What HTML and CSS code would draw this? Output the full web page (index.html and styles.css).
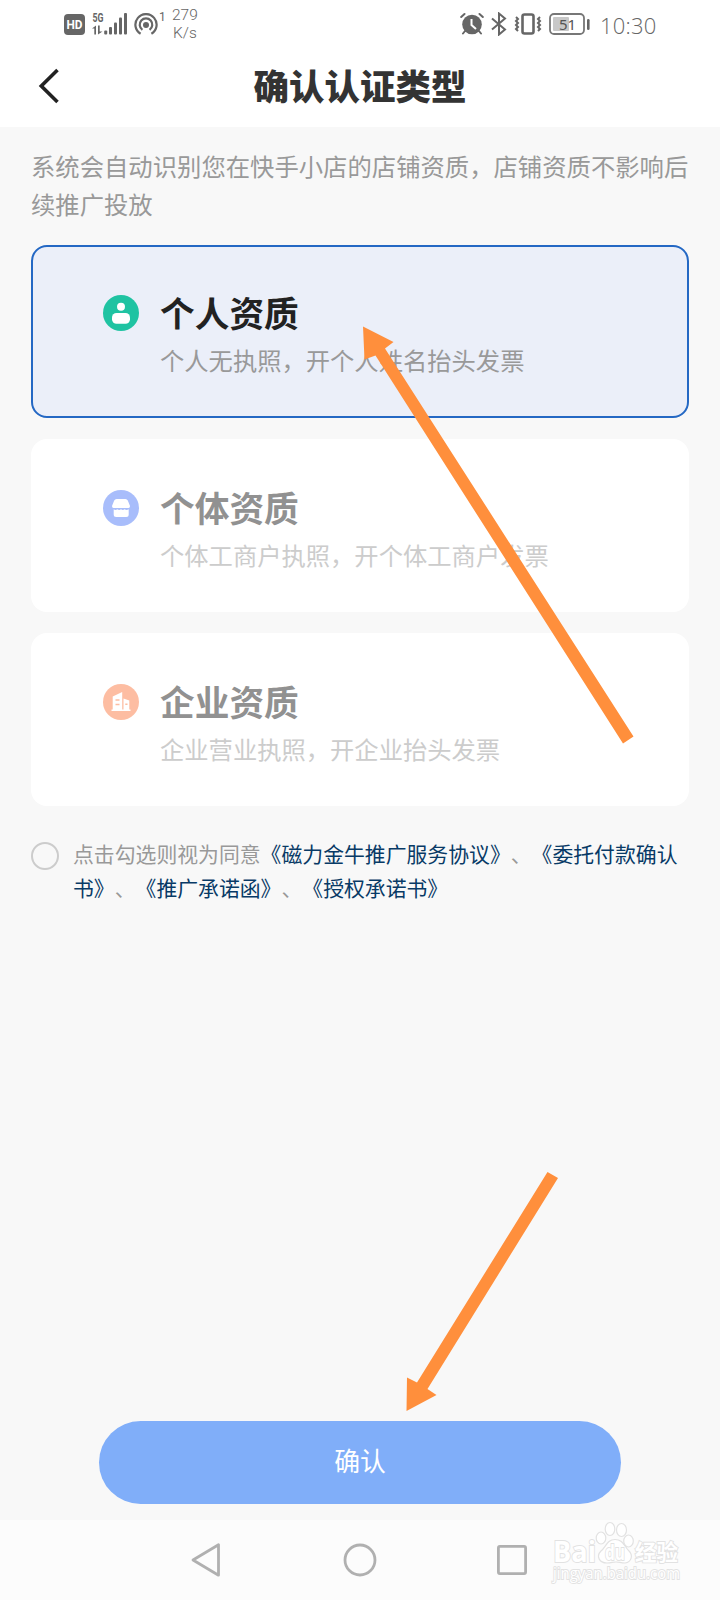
FILE: index.html
```
<!DOCTYPE html>
<html lang="zh-CN">
<head>
<meta charset="utf-8">
<title>确认认证类型</title>
<link rel="stylesheet" href="styles.css">
</head>
<body>
<div class="screen">
  <div class="status">
    <div class="status-left">
      <svg class="hd" width="21" height="21" viewBox="0 0 21 21"><rect width="21" height="21" rx="4" fill="#666"/><text x="10.5" y="15.2" text-anchor="middle" textLength="16" lengthAdjust="spacingAndGlyphs" class="hd-text">HD</text></svg>
      <svg class="signal" width="36" height="26" viewBox="0 -2 36 26" fill="#666">
        <text x="0.5" y="10.3" class="fiveg" textLength="11" lengthAdjust="spacingAndGlyphs">5G</text>
        <path d="M0 16.500 4 13.500V22.500H2.300V16.500ZM6 13.500H7.700V19.500H10.500L6 22.500Z"/>
        <rect x="12.200" y="18.500" width="3" height="4" rx="1"/><rect x="17" y="15" width="3" height="7.500" rx="1"/><rect x="22" y="10.500" width="3" height="12" rx="1"/><rect x="27" y="5.500" width="3" height="17" rx="1"/><rect x="32" y="1" width="3" height="21.500" rx="1"/>
      </svg>
      <svg class="hotspot" width="24" height="23" viewBox="0 0 24 23" fill="none" stroke="#666" stroke-width="2.200">
        <path d="M6.600 20.800A10.600 10.600 0 1 1 17.400 20.800"/><path d="M8.400 16.900A6.300 6.300 0 1 1 15.600 16.900"/><circle cx="12" cy="12" r="3" fill="#666" stroke="none"/>
      </svg>
      <span class="hotcount">1</span>
      <span class="speed">279<br>K/s</span>
    </div>
    <div class="status-right">
      <svg width="24" height="24" viewBox="0 0 24 24" fill="none" stroke="#666" stroke-width="2"><circle cx="12" cy="12.500" r="9.800" fill="#666" stroke="none"/><path d="M1.200 5 4.500 2M22.800 5 19.500 2M5 19 3 21.500M19 19l2 2.500" stroke-linecap="round"/><path d="M11.500 7V13L16 17" stroke="#fff"/></svg>
      <svg class="bt" width="16" height="24" viewBox="0 0 16 24" fill="none" stroke="#666" stroke-width="2"><path d="M1 6.500 14 17.500 8 22.500V1.500L14 6.500 1 17.500"/></svg>
      <svg class="vib" width="28" height="22" viewBox="0 0 28 22" fill="none" stroke="#666" stroke-width="2"><rect x="8.500" y="1.500" width="11" height="19" rx="2" stroke-width="2.600"/><path d="M2 4 4 6 2 8 4 10 2 12 4 14 2 16 4 18M26 4 24 6 26 8 24 10 26 12 24 14 26 16 24 18"/></svg>
      <svg class="battery" width="42" height="22" viewBox="0 0 42 22"><rect x="1" y="1" width="34" height="20" rx="4" fill="none" stroke="#777" stroke-width="1.800"/><rect x="4" y="4" width="16" height="14" rx="1" fill="#c8c8c8"/><rect x="38" y="6" width="2.600" height="11" rx="1.300" fill="#666"/><text x="18.500" y="16.500" text-anchor="middle" class="bat-text">51</text></svg>
      <span class="clock">10:30</span>
    </div>
  </div>
  <header class="header">
    <svg class="back" width="24" height="38" viewBox="0 0 24 38" fill="none" stroke="#222" stroke-width="3.600"><path d="M20.500 3 4.300 19 20.500 35"/></svg>
    <h1 class="title">确认认证类型</h1>
  </header>
  <main class="main">
    <p class="intro">系统会自动识别您在快手小店的店铺资质，店铺资质不影响后续推广投放</p>
    <div class="cards">
      <section class="card selected">
        <svg class="icon" width="36" height="36" viewBox="0 0 36 36"><circle cx="18" cy="18" r="18" fill="#1fc3a2"/><circle cx="18" cy="11.800" r="4" fill="#fff"/><rect x="9" y="18" width="18" height="10.700" rx="4.500" fill="#fff"/></svg>
        <div><h2 class="name">个人资质</h2><p class="desc">个人无执照，开个人姓名抬头发票</p></div>
      </section>
      <section class="card">
        <svg class="icon" width="36" height="36" viewBox="0 0 36 36"><circle cx="18" cy="18" r="18" fill="#a8bdfb"/><path d="M13.500 9H22.500Q24 9 24.800 10.500L27 16Q27 18 25.500 18H10.500Q9 18 9 16L11.200 10.500Q12 9 13.500 9ZM10.700 19.300Q12.500 20.500 14.300 19.300 16.200 20.500 18 19.300 19.800 20.500 21.700 19.300 23.500 20.500 25.700 19.300V24.500Q25.700 27 23.200 27H13.200Q10.700 27 10.700 24.500Z" fill="#fff"/></svg>
        <div><h2 class="name">个体资质</h2><p class="desc">个体工商户执照，开个体工商户发票</p></div>
      </section>
      <section class="card">
        <svg class="icon" width="36" height="36" viewBox="0 0 36 36"><circle cx="18" cy="18" r="18" fill="#fdbda2"/><path d="M8.500 25.500H9.700V12.500L19.200 8V25.500H20.500V14.500L26.300 16.500V25.500H27.500V27H8.500Z" fill="#fff"/><path d="M12.500 16H16.500M12.500 20.500H16.500M22.300 20.300H24.500" stroke="#fdbda2" stroke-width="1.500"/></svg>
        <div><h2 class="name">企业资质</h2><p class="desc">企业营业执照，开企业抬头发票</p></div>
      </section>
    </div>
    <div class="agree">
      <span class="radio"></span>
      <p class="terms">点击勾选则视为同意<a>《磁力金牛推广服务协议》</a>、<a>《委托付款确认书》</a>、<a>《推广承诺函》</a>、<a>《授权承诺书》</a></p>
    </div>
    <button class="confirm">确认</button>
  </main>
  <nav class="nav">
    <svg width="32" height="36" viewBox="0 0 32 36" fill="none" stroke="#b0b0b0" stroke-width="2.800" stroke-linejoin="round"><path d="M28.500 2.800V33.200L3 18Z"/></svg>
    <svg class="home" width="34" height="34" viewBox="0 0 34 34" fill="none" stroke="#b0b0b0" stroke-width="2.800"><circle cx="17" cy="17" r="15"/></svg>
    <svg width="32" height="32" viewBox="0 0 32 32" fill="none" stroke="#b0b0b0" stroke-width="2.800"><rect x="2.400" y="2.400" width="27.200" height="27.200" rx="1.500"/></svg>
  </nav>
  <svg class="overlay" width="720" height="1600" viewBox="0 0 720 1600">
    <g fill="#ff8f3c">
      <path d="M363 326.500 393.500 342 385 348.500 633.500 736.500 623 743.500 375.500 355.500 364.500 359.500Z"/>
      <path d="M406.500 1411 407 1377.500 417 1382.500 547.500 1172 558 1178 427.500 1389 436.500 1395Z"/>
    </g>
    <g class="mark">
      <text x="553" y="1562" class="mark-big" textLength="43" lengthAdjust="spacingAndGlyphs">Bai</text>
      <path d="M615 1539.500C607 1539.500 606 1547 601 1551 596 1556 599 1563 607 1563 612 1563 612 1562 616 1562 620 1562 620 1563 625 1563 632 1562 633 1555 629 1551 624 1546 623 1539.500 615 1539.500Z"/>
      <ellipse cx="601" cy="1538" rx="4.800" ry="6"/><ellipse cx="610" cy="1529" rx="4.800" ry="6.500"/><ellipse cx="621.500" cy="1530" rx="5" ry="6.500"/><ellipse cx="628.500" cy="1541" rx="4.800" ry="6"/>
      <text x="605" y="1560" class="mark-du" textLength="20" lengthAdjust="spacingAndGlyphs">du</text>
      <text x="635" y="1560" class="mark-cn" textLength="43" lengthAdjust="spacingAndGlyphs">经验</text>
      <text x="553" y="1579" class="mark-url" textLength="127" lengthAdjust="spacingAndGlyphs">jingyan.baidu.com</text>
    </g>
  </svg>
</div>
</body>
</html>
```
FILE: styles.css
```
* { box-sizing: border-box; margin: 0; padding: 0; }
body {
  background: #f8f8f8;
  font-family: "Noto Sans CJK SC", "Noto Sans", sans-serif;
  text-spacing-trim: space-all;
}
.screen { position: relative; width: 720px; height: 1600px; display: flex; flex-direction: column; overflow: hidden; }

.status { height: 48px; background: #fff; display: flex; justify-content: space-between; padding: 0 63px 0 64px; color: #666; font-family: Roboto, sans-serif; }
.status-left, .status-right { display: flex; align-items: flex-start; }
.status-right { padding-top: 12px; }
.hd { margin-top: 14px; }
.signal { margin: 10px 0 0 7px; }
.hotspot { margin: 13px 0 0 6px; }
.hd-text { font: 700 12.500px Roboto, sans-serif; fill: #fff; }
.fiveg { font: 700 12.500px Roboto, sans-serif; }
.hotcount { font-size: 12px; line-height: 14px; margin: 10px 0 0 1px; width: 13px; }
.speed { font-size: 15.500px; line-height: 18px; margin-top: 6px; font-weight: 300; text-align: center; }
.bt { margin-left: 7px; }
.vib { margin: 1px 0 0 7px; }
.battery { margin: 1px 0 0 7px; }
.bat-text { font: 400 15px "Noto Sans", sans-serif; fill: #555; }
.clock { font: 300 22px/26px "Open Sans", "Noto Sans", sans-serif; letter-spacing: 0.2px; margin-left: 9px; width: 57px; white-space: nowrap; }

.header { height: 79px; background: #fff; display: grid; grid-template-columns: 60px 1fr 60px; align-items: start; }
.back { margin: 18.500px 0 0 37px; }
.title { font-size: 35.500px; line-height: 50px; font-weight: 900; color: #333; text-align: center; margin-top: 12px; }

.main { height: 1393px; padding: 20px 31px 16px; display: flex; flex-direction: column; }
.intro { font-size: 24.350px; line-height: 37.500px; height: 76px; color: #999; margin-right: -6px; }
.cards { margin-top: 22px; display: flex; flex-direction: column; gap: 21px; }
.card { height: 173px; border-radius: 16px; background: #fff; padding: 43px 0 0 72px; display: flex; gap: 21px; }
.card .icon { flex: none; margin-top: 8px; }
.name { font-size: 34.700px; line-height: 50px; font-weight: 700; color: #919191; }
.desc { font-size: 24.300px; line-height: 36px; margin-top: 5px; color: #ccc; white-space: nowrap; }
.selected { background: #ebeff9; border: 2px solid #2468c4; padding: 40px 0 0 70px; }
.selected .name { color: #222; }
.selected .desc { color: #999; }

.agree { display: flex; gap: 14px; margin-top: 30px; }
.radio { flex: none; width: 28px; height: 28px; border: 2px solid #ccc; border-radius: 50%; margin-top: 6px; }
.terms { font-size: 20.850px; line-height: 34px; color: #999; word-break: break-all; margin-right: -8px; }
.terms a { color: #083a66; }

.confirm { align-self: center; width: 522px; height: 83px; margin-top: auto; padding-bottom: 5px; border: 0; border-radius: 42px; background: #80aef9; color: #fff; font: 400 25.800px/36px "Noto Sans CJK SC", sans-serif; }

.nav { height: 80px; background: #fcfcfc; display: flex; align-items: center; justify-content: space-between; padding: 0 192px 0 190px; }
.home { margin-left: 2px; }

.overlay { position: absolute; inset: 0; pointer-events: none; }
.mark { fill: #fff; stroke: #e2e2e2; stroke-width: 1.200; }
.mark text { paint-order: stroke; stroke-width: 1.800; }
.mark-big { font: 700 29px "Open Sans", sans-serif; }
.mark-du { font: 700 21px "Open Sans", sans-serif; }
.mark-cn { font: 700 22px "Noto Sans CJK SC", sans-serif; }
.mark-url { font: 400 15.500px "Open Sans", sans-serif; }
```
